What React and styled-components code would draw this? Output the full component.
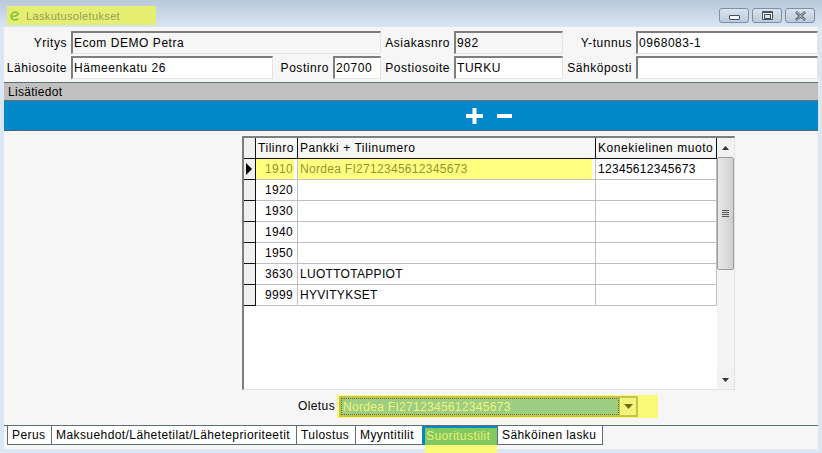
import React from 'react';
import styled, { createGlobalStyle } from 'styled-components';

const accounts = [
  { nro: '1910', name: 'Nordea FI2712345612345673', code: '12345612345673', active: true },
  { nro: '1920', name: '', code: '' },
  { nro: '1930', name: '', code: '' },
  { nro: '1940', name: '', code: '' },
  { nro: '1950', name: '', code: '' },
  { nro: '3630', name: 'LUOTTOTAPPIOT', code: '' },
  { nro: '9999', name: 'HYVITYKSET', code: '' },
];

const tabs = [
  { label: 'Perus', width: 44 },
  { label: 'Maksuehdot/Lähetetilat/Läheteprioriteetit', width: 245 },
  { label: 'Tulostus', width: 59 },
  { label: 'Myyntitilit', width: 67 },
  { label: 'Suoritustilit', width: 75, active: true },
  { label: 'Sähköinen lasku', width: 106 },
];

export default function App() {
  return (
    <Window>
      <GlobalStyle />
      <TitleBar>
        <TitleMark>
          <svg width="12" height="12" viewBox="0 0 14 14">
            <path d="M2.5 7.5 C5.5 7.5 9 6.5 10.5 5 C10.5 3 8.5 2 6.5 2.5 C3.5 3.2 2 6 2.5 8.5 C3 11 6 12.5 11 10.5" fill="none" stroke="#86c83c" strokeWidth="2" />
          </svg>
          <TitleText>Laskutusoletukset</TitleText>
        </TitleMark>
        <WindowButtons>
          <WindowButton>
            <MinGlyph />
          </WindowButton>
          <WindowButton>
            <MaxGlyph />
          </WindowButton>
          <WindowButton>
            <svg width="13" height="10" viewBox="0 0 13 10">
              <path d="M2 1 L11 9 M11 1 L2 9" stroke="#44505e" strokeWidth="2.4" />
              <path d="M2.5 1 L10.5 9 M10.5 1 L2.5 9" stroke="#f4f6f8" strokeWidth="0.9" />
            </svg>
          </WindowButton>
        </WindowButtons>
      </TitleBar>
      <Client>
        <FormGrid>
          <FieldLabel>Yritys</FieldLabel>
          <WideField $readOnly>Ecom DEMO Petra</WideField>
          <FieldLabel>Asiakasnro</FieldLabel>
          <Field $readOnly>982</Field>
          <FieldLabel>Y-tunnus</FieldLabel>
          <Field>0968083-1</Field>

          <FieldLabel>Lähiosoite</FieldLabel>
          <Field>Hämeenkatu 26</Field>
          <FieldLabel>Postinro</FieldLabel>
          <Field>20700</Field>
          <FieldLabel>Postiosoite</FieldLabel>
          <Field>TURKU</Field>
          <FieldLabel>Sähköposti</FieldLabel>
          <Field />
        </FormGrid>
        <SectionBar>Lisätiedot</SectionBar>
        <ActionBar>
          <svg width="46" height="16" viewBox="0 0 46 16">
            <path d="M0 8 H17 M8.5 0 V16" stroke="#fff" strokeWidth="4" />
            <path d="M31 8 H46" stroke="#fff" strokeWidth="4" />
          </svg>
        </ActionBar>
        <Main>
          <TableFrame>
            <TableBody>
              <HeaderRow>
                <RowMarker />
                <HeaderCell>Tilinro</HeaderCell>
                <HeaderCell>Pankki + Tilinumero</HeaderCell>
                <HeaderCell>Konekielinen muoto</HeaderCell>
              </HeaderRow>
              {accounts.map(a => (
                <Row key={a.nro}>
                  <RowMarker>{a.active && <MarkerArrow />}</RowMarker>
                  <NumberCell $active={a.active}>{a.nro}</NumberCell>
                  <Cell $active={a.active}>{a.name}</Cell>
                  <Cell>{a.code}</Cell>
                </Row>
              ))}
            </TableBody>
            <ScrollBar>
              <ScrollArrow>
                <svg width="7" height="4" viewBox="0 0 7 4"><path d="M3.5 0 L7 4 H0 Z" fill="#333" /></svg>
              </ScrollArrow>
              <ScrollThumb>
                <Grip />
              </ScrollThumb>
              <ScrollTrack />
              <ScrollArrow>
                <svg width="7" height="4" viewBox="0 0 7 4"><path d="M0 0 H7 L3.5 4 Z" fill="#333" /></svg>
              </ScrollArrow>
            </ScrollBar>
          </TableFrame>
          <DefaultRow>
            <DefaultLabel>Oletus</DefaultLabel>
            <ComboMark>
              <Combo>
                <ComboValue>Nordea FI2712345612345673</ComboValue>
                <ComboButton>
                  <svg width="9" height="5" viewBox="0 0 9 5"><path d="M0 0 H9 L4.5 5 Z" fill="#6c6c10" /></svg>
                </ComboButton>
              </Combo>
            </ComboMark>
          </DefaultRow>
        </Main>
        <TabBar>
          {tabs.map(t => (
            <Tab key={t.label} $width={t.width} $active={t.active}>{t.label}</Tab>
          ))}
        </TabBar>
      </Client>
    </Window>
  );
}

const GlobalStyle = createGlobalStyle`
  html, body {
    margin: 0;
    padding: 0;
    background: #dbe7f4;
  }
  * {
    box-sizing: border-box;
  }
`;

const Window = styled.div`
  width: 822px;
  height: 453px;
  overflow: hidden;
  display: flex;
  flex-direction: column;
  background: #dbe7f4;
  font-family: "Liberation Sans", Arial, sans-serif;
  font-size: 12px;
  letter-spacing: 0.55px;
  color: #000;
`;

const TitleBar = styled.div`
  height: 27px;
  flex: none;
  display: flex;
  align-items: flex-start;
  justify-content: space-between;
  padding: 6px 7px 0 7px;
  background: linear-gradient(#b9c9da, #d8e5f3);
`;

const TitleMark = styled.div`
  width: 149px;
  height: 19px;
  display: flex;
  align-items: center;
  gap: 5px;
  padding-left: 2px;
  background: #e6ee72;
`;

const TitleText = styled.span`
  font-size: 11px;
  letter-spacing: 0.35px;
  color: #94a05c;
`;

const WindowButtons = styled.div`
  display: flex;
  gap: 3px;
  padding-top: 2px;
`;

const WindowButton = styled.div`
  width: 30px;
  height: 15px;
  display: flex;
  align-items: center;
  justify-content: center;
  border: 1px solid #7d8ea6;
  border-radius: 3px;
  background: linear-gradient(#dbe4ee, #bccbdc);
`;

const MinGlyph = styled.div`
  width: 11px;
  height: 5px;
  margin-top: 4px;
  background: #f4f6f8;
  border: 1px solid #44505e;
  border-radius: 1px;
`;

const MaxGlyph = styled.div`
  width: 11px;
  height: 9px;
  background: #f4f6f8;
  border: 1px solid #44505e;
  border-top-width: 2px;
  border-radius: 1px;
  &::after {
    content: '';
    display: block;
    width: 5px;
    height: 3px;
    margin: 1px auto 0;
    background: #dbe4ee;
    border: 1px solid #44505e;
  }
`;

const Client = styled.div`
  width: 814px;
  height: 422px;
  margin-left: 4px;
  display: flex;
  flex-direction: column;
  background: #f6f6f6;
`;

const FormGrid = styled.div`
  height: 56px;
  flex: none;
  display: grid;
  grid-template-columns: 63px 202px 52px 48px 65px 109px 65px 182px;
  grid-auto-rows: 25px;
  column-gap: 4px;
  padding-top: 4px;
  align-items: start;
  border-bottom: 1px solid #5d6f73;
`;

const FieldLabel = styled.div`
  height: 23px;
  line-height: 24px;
  text-align: right;
  white-space: nowrap;
`;

const Field = styled.div`
  height: 23px;
  padding: 1px 0 0 1px;
  line-height: 18px;
  white-space: nowrap;
  overflow: hidden;
  background: ${props => (props.$readOnly ? '#f6f6f6' : '#fff')};
  border-style: solid;
  border-width: 2px 1px 1px 2px;
  border-color: #7e7e7e #e3e3e3 #e3e3e3 #7e7e7e;
`;

const WideField = styled(Field)`
  grid-column: span 3;
`;

const SectionBar = styled.div`
  height: 18px;
  flex: none;
  padding-left: 4px;
  line-height: 18px;
  letter-spacing: 0.3px;
  background: #c0c0c0;
  border-bottom: 1px solid #6f6f6f;
`;

const ActionBar = styled.div`
  height: 30px;
  flex: none;
  display: flex;
  align-items: center;
  justify-content: center;
  padding-left: 155px;
  background: #0088c8;
  border-bottom: 1px solid #4c6472;
`;

const Main = styled.div`
  flex: 1;
  display: flex;
  flex-direction: column;
  align-items: flex-start;
  padding: 5px 0 0 238px;
`;

const TableFrame = styled.div`
  width: 493px;
  height: 254px;
  display: flex;
  justify-content: space-between;
  background: #fff;
  border-style: solid;
  border-width: 2px 1px 1px 2px;
  border-color: #7e7e7e #e3e3e3 #e3e3e3 #7e7e7e;
`;

const TableBody = styled.div`
  width: 473px;
`;

const columns = '12px 42px 298px 121px';

const HeaderRow = styled.div`
  height: 21px;
  display: grid;
  grid-template-columns: ${columns};
  background: #f6f6f6;
`;

const Row = styled.div`
  height: 21px;
  display: grid;
  grid-template-columns: ${columns};
`;

const RowMarker = styled.div`
  display: flex;
  align-items: center;
  background: #f0f0f0;
  border-right: 1px solid #111;
  border-bottom: 1px solid #111;
`;

const MarkerArrow = styled.div`
  margin-left: 2px;
  border-left: 6px solid #000;
  border-top: 6px solid transparent;
  border-bottom: 6px solid transparent;
`;

const HeaderCell = styled.div`
  padding-left: 2px;
  line-height: 21px;
  white-space: nowrap;
  overflow: hidden;
  border-right: 1px solid #111;
  border-bottom: 1px solid #111;
`;

const Cell = styled.div`
  padding-left: 2px;
  line-height: 20px;
  letter-spacing: 0.3px;
  white-space: nowrap;
  overflow: hidden;
  color: ${props => (props.$active ? '#8f9630' : '#000')};
  background: ${props => (props.$active ? 'linear-gradient(#ffff80, #ffff80) left top / calc(100% - 3px) 100% no-repeat' : 'transparent')};
  border-right: 1px solid #c0c0c0;
  border-bottom: 1px solid #c0c0c0;
`;

const NumberCell = styled(Cell)`
  padding: 0 4px 0 0;
  text-align: right;
`;

const ScrollBar = styled.div`
  width: 17px;
  display: flex;
  flex-direction: column;
`;

const ScrollArrow = styled.div`
  height: 19px;
  flex: none;
  display: flex;
  align-items: center;
  justify-content: center;
  background: #f2f2f2;
`;

const ScrollThumb = styled.div`
  height: 113px;
  flex: none;
  display: flex;
  align-items: center;
  justify-content: center;
  background: linear-gradient(90deg, #e8e8e8, #cfcfcf);
  border: 1px solid #9a9a9a;
  border-radius: 2px;
`;

const Grip = styled.div`
  width: 7px;
  height: 8px;
  background: repeating-linear-gradient(#555 0 1px, transparent 1px 2px);
`;

const ScrollTrack = styled.div`
  flex: 1;
  background: #f4f4f4;
`;

const DefaultRow = styled.div`
  display: flex;
  align-items: center;
  gap: 3px;
  margin: 5px 0 0 56px;
`;

const DefaultLabel = styled.div`
  width: 36px;
  line-height: 23px;
  letter-spacing: 0.4px;
  white-space: nowrap;
`;

const ComboMark = styled.div`
  width: 321px;
  height: 23px;
  padding: 1px 20px 1px 2px;
  background: #fafa78;
`;

const Combo = styled.div`
  height: 21px;
  display: flex;
  background: #c4c44c;
  padding: 2px;
`;

const ComboValue = styled.div`
  flex: 1;
  padding-left: 1px;
  line-height: 16px;
  letter-spacing: 0.3px;
  color: #eef578;
  background: #9ccd80;
  border: 1px dotted #7a6a10;
`;

const ComboButton = styled.div`
  width: 16px;
  flex: none;
  display: flex;
  align-items: center;
  justify-content: center;
  margin-left: 1px;
  background: #f4f47c;
`;

const TabBar = styled.div`
  height: 24px;
  flex: none;
  display: flex;
  padding-left: 3px;
  border-top: 1px solid #5d6f73;
`;

const Tab = styled.div`
  position: relative;
  width: ${props => props.$width}px;
  height: 19px;
  padding-left: 4px;
  line-height: 18px;
  letter-spacing: 0.42px;
  white-space: nowrap;
  background: ${props => (props.$active ? '#80c860' : '#fff')};
  color: ${props => (props.$active ? '#f0f070' : '#000')};
  border-style: solid;
  border-color: ${props => (props.$active ? '#0088c8' : '#5d6f73')};
  border-width: ${props => (props.$active ? '2px 0 0 3px' : '0 0 1px 1px')};

  &:last-child {
    border-right-width: 1px;
  }

  ${props => props.$active && `
    padding-left: 1px;
    line-height: 16px;

    &::after {
      content: '';
      position: absolute;
      left: 0;
      right: 0;
      top: 17px;
      height: 10px;
      background: #fafa78;
    }
  `}
`;
